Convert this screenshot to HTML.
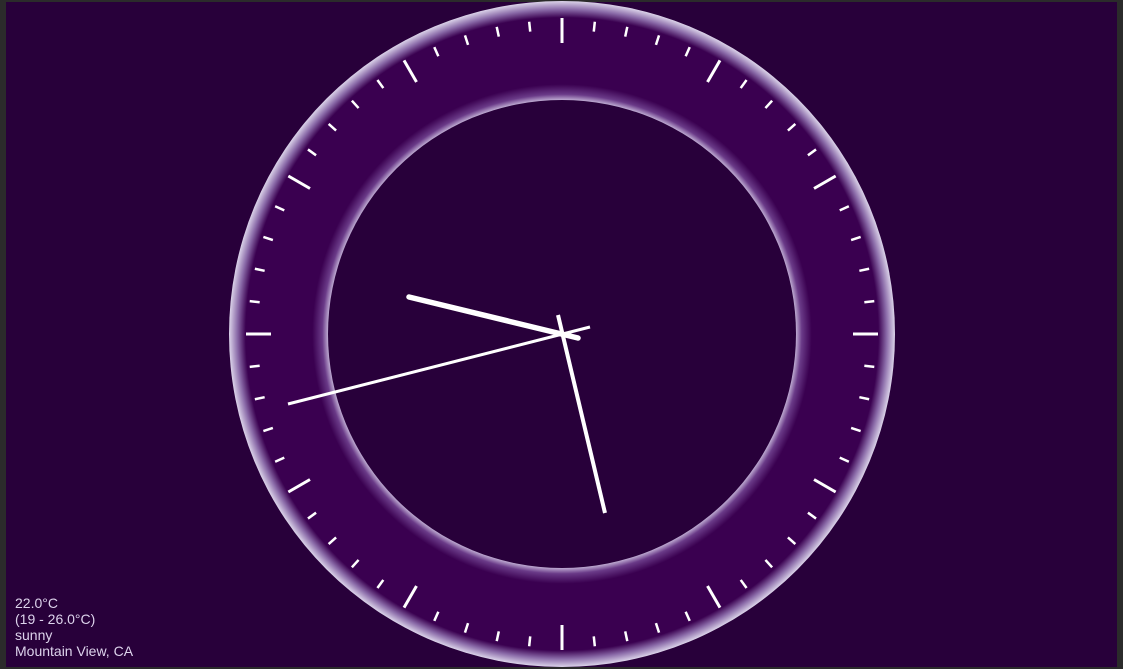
<!DOCTYPE html>
<html><head><meta charset="utf-8"><style>
html,body{margin:0;padding:0;background:#2b2b2b;width:1123px;height:669px;overflow:hidden}
#f{position:absolute;left:6px;top:2px;width:1111px;height:665px;background:#28003a}
#t{position:absolute;left:15px;top:595px;font:14px/16px "Liberation Sans",sans-serif;color:#ddd3ec}
svg{position:absolute;left:0;top:0}
</style></head><body>
<div id="f"></div>
<svg width="1123" height="669">
<defs>
<radialGradient id="g" cx="562" cy="334" r="333" gradientUnits="userSpaceOnUse">
<stop offset="0.703" stop-color="#bca8d0"/>
<stop offset="0.72" stop-color="#6a3a88"/>
<stop offset="0.75" stop-color="#3a0050"/>
<stop offset="0.95" stop-color="#3a0050"/>
<stop offset="0.975" stop-color="#8a6aa8"/>
<stop offset="1" stop-color="#dcd4ea"/>
</radialGradient>
<line id="m" x1="0" y1="-304" x2="0" y2="-314" stroke="#fff" stroke-width="2.5"/>
<line id="M" x1="0" y1="-291" x2="0" y2="-316" stroke="#fff" stroke-width="3"/>
</defs>
<circle cx="562" cy="334" r="333" fill="url(#g)"/>
<circle cx="562" cy="334" r="234" fill="#28003a"/>
<g transform="translate(562,334)">
<use href="#M"/><use href="#m" transform="rotate(6)"/><use href="#m" transform="rotate(12)"/><use href="#m" transform="rotate(18)"/><use href="#m" transform="rotate(24)"/>
<use href="#M" transform="rotate(30)"/><use href="#m" transform="rotate(36)"/><use href="#m" transform="rotate(42)"/><use href="#m" transform="rotate(48)"/><use href="#m" transform="rotate(54)"/>
<use href="#M" transform="rotate(60)"/><use href="#m" transform="rotate(66)"/><use href="#m" transform="rotate(72)"/><use href="#m" transform="rotate(78)"/><use href="#m" transform="rotate(84)"/>
<use href="#M" transform="rotate(90)"/><use href="#m" transform="rotate(96)"/><use href="#m" transform="rotate(102)"/><use href="#m" transform="rotate(108)"/><use href="#m" transform="rotate(114)"/>
<use href="#M" transform="rotate(120)"/><use href="#m" transform="rotate(126)"/><use href="#m" transform="rotate(132)"/><use href="#m" transform="rotate(138)"/><use href="#m" transform="rotate(144)"/>
<use href="#M" transform="rotate(150)"/><use href="#m" transform="rotate(156)"/><use href="#m" transform="rotate(162)"/><use href="#m" transform="rotate(168)"/><use href="#m" transform="rotate(174)"/>
<use href="#M" transform="rotate(180)"/><use href="#m" transform="rotate(186)"/><use href="#m" transform="rotate(192)"/><use href="#m" transform="rotate(198)"/><use href="#m" transform="rotate(204)"/>
<use href="#M" transform="rotate(210)"/><use href="#m" transform="rotate(216)"/><use href="#m" transform="rotate(222)"/><use href="#m" transform="rotate(228)"/><use href="#m" transform="rotate(234)"/>
<use href="#M" transform="rotate(240)"/><use href="#m" transform="rotate(246)"/><use href="#m" transform="rotate(252)"/><use href="#m" transform="rotate(258)"/><use href="#m" transform="rotate(264)"/>
<use href="#M" transform="rotate(270)"/><use href="#m" transform="rotate(276)"/><use href="#m" transform="rotate(282)"/><use href="#m" transform="rotate(288)"/><use href="#m" transform="rotate(294)"/>
<use href="#M" transform="rotate(300)"/><use href="#m" transform="rotate(306)"/><use href="#m" transform="rotate(312)"/><use href="#m" transform="rotate(318)"/><use href="#m" transform="rotate(324)"/>
<use href="#M" transform="rotate(330)"/><use href="#m" transform="rotate(336)"/><use href="#m" transform="rotate(342)"/><use href="#m" transform="rotate(348)"/><use href="#m" transform="rotate(354)"/>
</g>
<line x1="409" y1="297" x2="578" y2="338" stroke="#fff" stroke-width="5.5" stroke-linecap="round"/>
<line x1="558" y1="315" x2="605" y2="513" stroke="#fff" stroke-width="4"/>
<line x1="288" y1="404" x2="590" y2="327" stroke="#fff" stroke-width="3"/>
</svg>
<div id="t">22.0°C<br>(19 - 26.0°C)<br>sunny<br>Mountain View, CA</div>
</body></html>
